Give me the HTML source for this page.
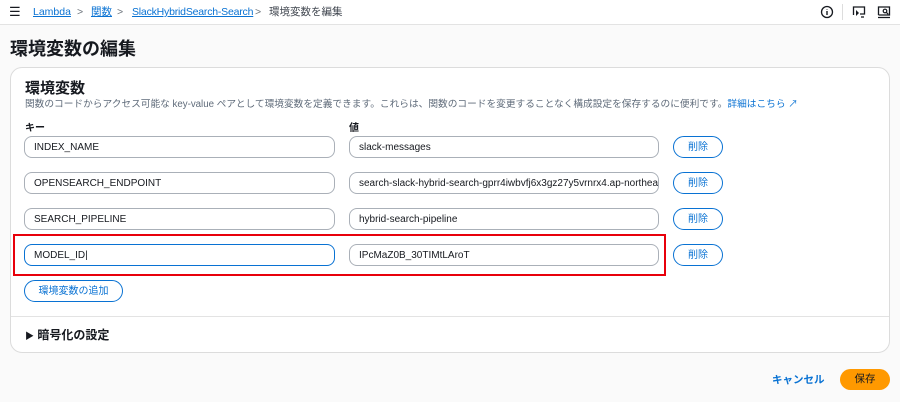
<!DOCTYPE html>
<html><head><meta charset="utf-8"><style>
*{box-sizing:border-box;margin:0;padding:0}
body{width:900px;height:402px;background:#fafafa;font-family:"Liberation Sans","Noto Sans CJK JP",sans-serif;color:#16191f;position:relative;overflow:hidden}
.top{position:absolute;left:0;top:0;width:900px;height:25px;background:#fff;border-bottom:1px solid #e3e3e3}
.abs{position:absolute;white-space:nowrap}
.lnk{color:#0972d3}
.bc{font-size:10.5px;top:5px;line-height:14px;height:14px}
.card{position:absolute;left:10px;top:67px;width:880px;height:286px;background:#fff;border:1px solid #dcdcdc;border-radius:12px}
.in{position:absolute;height:22px;border:1px solid #aab0b8;border-radius:8px;background:#fff;font-size:10px;display:flex;align-items:center;padding:1px 9px 0;white-space:nowrap;overflow:hidden;color:#16191f}
.del{position:absolute;left:673px;width:50px;height:22px;border:1.5px solid #0972d3;border-radius:11px;color:#0972d3;font-size:10px;display:flex;align-items:center;justify-content:center;padding-bottom:3px}
</style></head><body>
<div class="top"></div>
<div class="abs" style="left:9px;top:4px;font-size:13px;">☰</div>
<div class="abs bc lnk" style="left:33px;text-decoration:underline">Lambda</div>
<div class="abs bc" style="left:77px;color:#687078">&gt;</div>
<div class="abs bc lnk" style="left:91px;text-decoration:underline">関数</div>
<div class="abs bc" style="left:117px;color:#687078">&gt;</div>
<div class="abs bc lnk" style="left:132px;text-decoration:underline;letter-spacing:-0.2px">SlackHybridSearch-Search</div>
<div class="abs bc" style="left:255px;color:#687078">&gt;</div>
<div class="abs bc" style="left:269px;color:#414750">環境変数を編集</div>
<svg class="abs" style="left:820px;top:5px" width="14" height="14" viewBox="0 0 14 14"><circle cx="7" cy="7" r="5.5" fill="none" stroke="#16191f" stroke-width="1.3"/><path d="M7 6v4M7 4v.5" stroke="#16191f" stroke-width="1.4"/></svg>
<div class="abs" style="left:842px;top:4px;width:1px;height:16px;background:#ddd"></div>
<svg class="abs" style="left:852px;top:5px" width="14" height="14" viewBox="0 0 14 14"><path d="M1.5 10V2h11v7H8" fill="none" stroke="#16191f" stroke-width="1.3"/><path d="M4 5l3 3-3 3z" fill="#16191f"/><path d="M9 12h3" stroke="#16191f" stroke-width="1.3"/></svg>
<svg class="abs" style="left:877px;top:5px" width="14" height="14" viewBox="0 0 14 14"><path d="M1.5 10V2h11v8H1.5M1 12.5h12" fill="none" stroke="#16191f" stroke-width="1.3"/><circle cx="8" cy="6" r="1.8" fill="none" stroke="#16191f" stroke-width="1.2"/><path d="M9.3 7.3l2 2" stroke="#16191f" stroke-width="1.2"/></svg>
<div class="abs" style="left:10px;top:35px;font-size:18px;font-weight:bold">環境変数の編集</div>
<div class="card"></div>
<div class="abs" style="left:25px;top:77px;font-size:15px;font-weight:bold">環境変数</div>
<div class="abs" style="left:25px;top:96px;font-size:9.7px;color:#5f6b7a">関数のコードからアクセス可能な key-value ペアとして環境変数を定義できます。これらは、関数のコードを変更することなく構成設定を保存するのに便利です。<span class="lnk">詳細はこちら ↗</span></div>
<div class="abs" style="left:25px;top:119px;font-size:10px;font-weight:bold">キー</div>
<div class="abs" style="left:349px;top:119px;font-size:10px;font-weight:bold">値</div>
<div class="in" style="left:24px;top:136px;width:311px">INDEX_NAME</div>
<div class="in" style="left:349px;top:136px;width:310px">slack-messages</div>
<div class="del" style="top:136px">削除</div>
<div class="in" style="left:24px;top:172px;width:311px">OPENSEARCH_ENDPOINT</div>
<div class="in" style="left:349px;top:172px;width:310px">search-slack-hybrid-search-gprr4iwbvfj6x3gz27y5vrnrx4.ap-northeast-1</div>
<div class="del" style="top:172px">削除</div>
<div class="in" style="left:24px;top:208px;width:311px">SEARCH_PIPELINE</div>
<div class="in" style="left:349px;top:208px;width:310px">hybrid-search-pipeline</div>
<div class="del" style="top:208px">削除</div>
<div class="abs" style="left:13px;top:234px;width:653px;height:42px;border:2.5px solid #e8000b"></div>
<div class="in" style="left:24px;top:244px;width:311px;border:1.5px solid #0972d3">MODEL_ID|</div>
<div class="in" style="left:349px;top:244px;width:310px">IPcMaZ0B_30TIMtLAroT</div>
<div class="del" style="top:244px">削除</div>
<div class="del" style="left:24px;top:280px;width:99px">環境変数の追加</div>
<div class="abs" style="left:11px;top:316px;width:878px;height:1px;background:#e3e3e3"></div>
<div class="abs" style="left:25px;top:326px;font-size:12px;font-weight:bold"><span style="font-size:9px">▶</span> 暗号化の設定</div>
<div class="abs lnk" style="left:772px;top:372px;font-size:10.5px;font-weight:bold">キャンセル</div>
<div class="abs" style="left:840px;top:369px;width:50px;height:21px;background:#ff9900;border-radius:11px;font-size:10.5px;display:flex;align-items:center;justify-content:center;padding-bottom:2px">保存</div>
</body></html>
